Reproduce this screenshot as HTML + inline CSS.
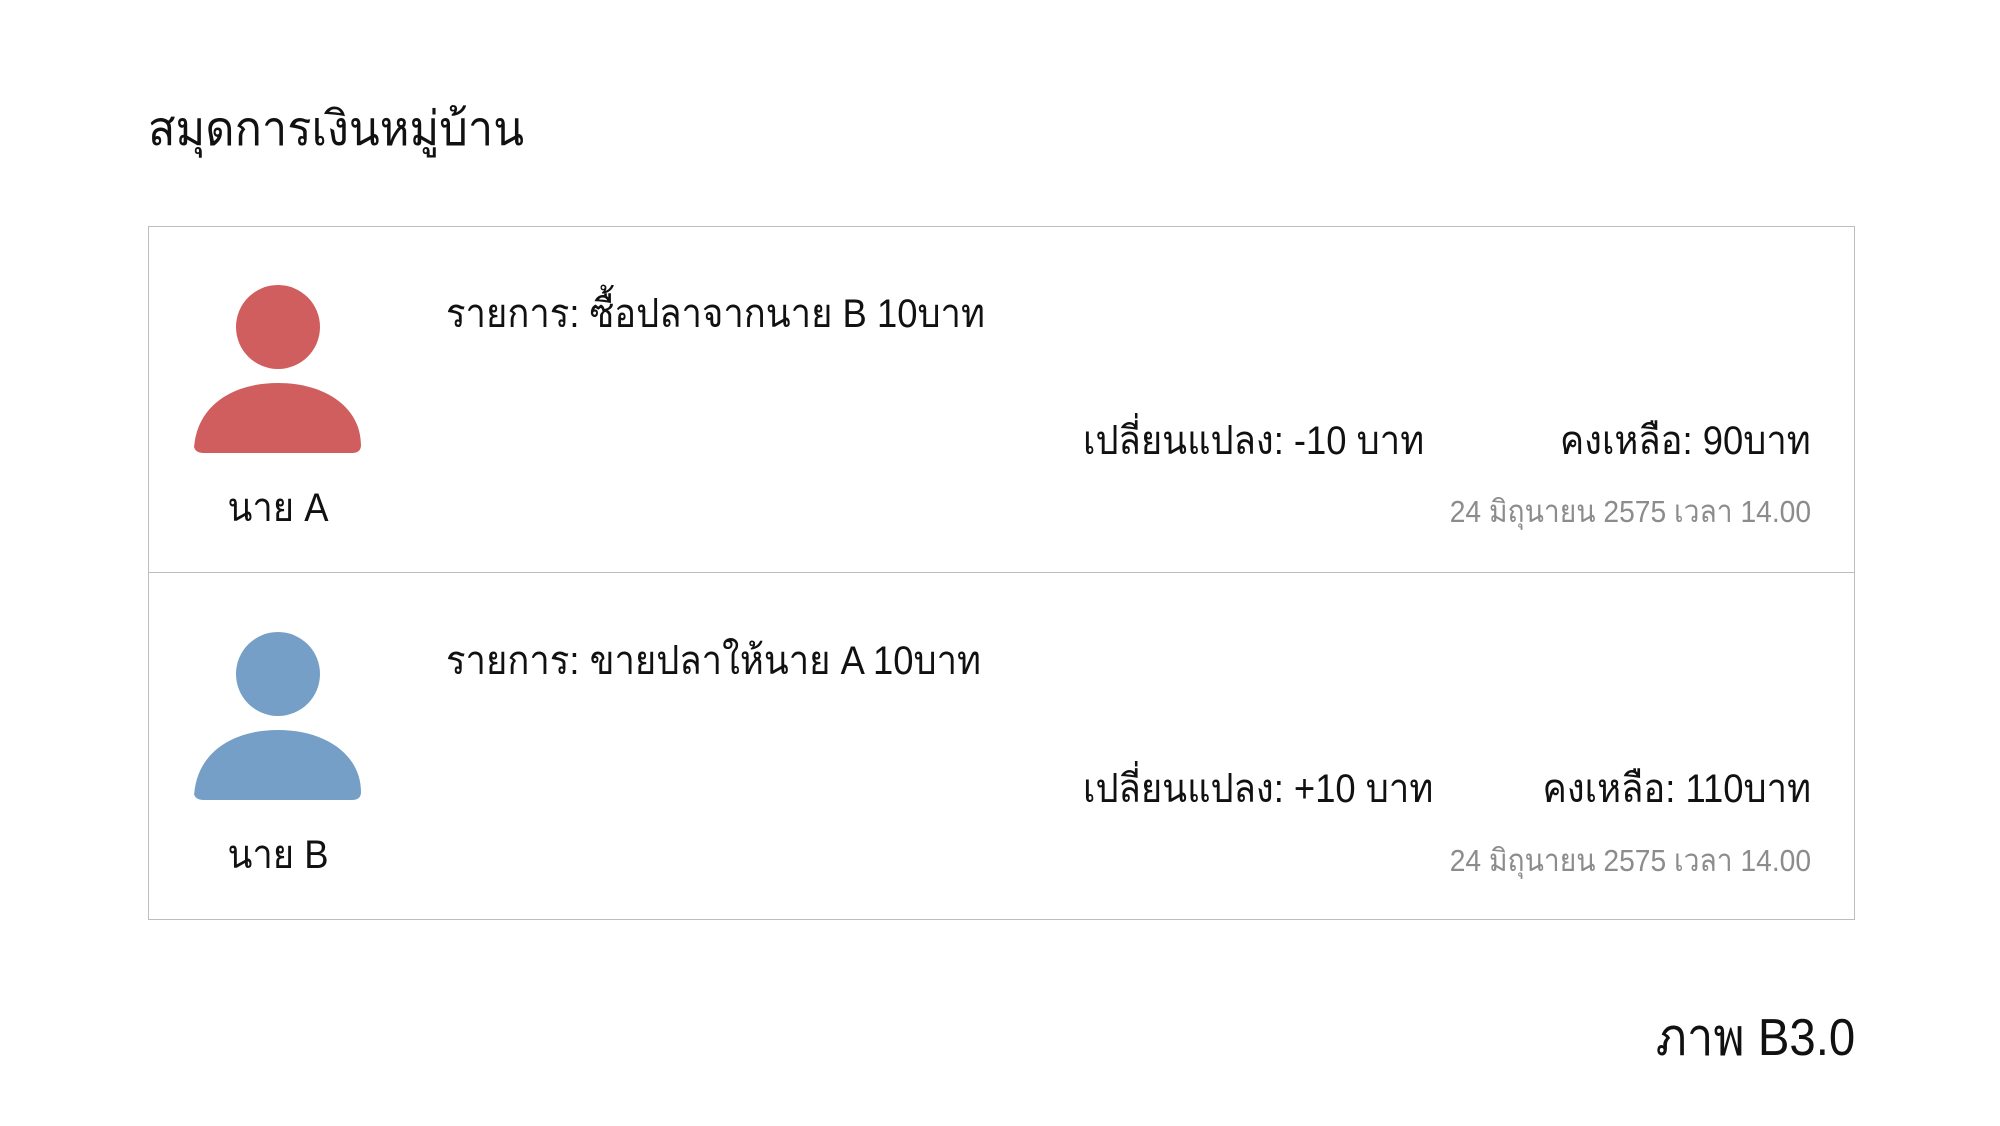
<!DOCTYPE html>
<html><head><meta charset="utf-8"><style>
html,body{margin:0;padding:0;background:#fff;width:2000px;height:1126px;overflow:hidden;font-family:"Liberation Sans","DejaVu Sans",sans-serif;color:#111}
.a{position:absolute;white-space:nowrap;line-height:1}
.l{transform:scaleX(0.91);transform-origin:left center}
.r{transform:scaleX(0.91);transform-origin:right center}
.c{transform:scaleX(0.91);transform-origin:center center}
.box{position:absolute;left:148px;top:226px;width:1707px;height:694px;border:1.5px solid #bdbdbd;box-sizing:border-box}
.sep{position:absolute;left:148px;top:572px;width:1707px;height:0;border-top:1.5px solid #bdbdbd}
.t{font-size:40px}
.d{font-size:31px;color:#8c8c8c}
</style></head><body>
<div class="a l" style="left:148px;top:106px;font-size:48px;transform:scaleX(0.94)">สมุดการเงินหมู่บ้าน</div>
<div class="box"></div>
<div class="sep"></div>

<svg class="a" style="left:190px;top:283px" width="176" height="175" viewBox="0 0 176 175">
<circle cx="88" cy="44" r="42" fill="#d05e5e"/>
<path d="M4 170 C4 125 40 100 88 100 C136 100 171 125 171 162 Q171 170 162 170 L14 170 Q4 170 4 162Z" fill="#d05e5e"/>
</svg>
<div class="a t c" style="left:178px;top:488px;width:200px;text-align:center">นาย A</div>
<div class="a t l" style="left:446px;top:294px">รายการ: ซื้อปลาจากนาย B 10บาท</div>
<div class="a t l" style="left:1083px;top:421px">เปลี่ยนแปลง: -10 บาท</div>
<div class="a t r" style="right:189px;top:421px">คงเหลือ: 90บาท</div>
<div class="a d r" style="right:189px;top:496px">24 มิถุนายน 2575 เวลา 14.00</div>

<svg class="a" style="left:190px;top:630px" width="176" height="175" viewBox="0 0 176 175">
<circle cx="88" cy="44" r="42" fill="#759fc6"/>
<path d="M4 170 C4 125 40 100 88 100 C136 100 171 125 171 162 Q171 170 162 170 L14 170 Q4 170 4 162Z" fill="#759fc6"/>
</svg>
<div class="a t c" style="left:178px;top:835px;width:200px;text-align:center">นาย B</div>
<div class="a t l" style="left:446px;top:641px">รายการ: ขายปลาให้นาย A 10บาท</div>
<div class="a t l" style="left:1083px;top:769px">เปลี่ยนแปลง: +10 บาท</div>
<div class="a t r" style="right:189px;top:769px">คงเหลือ: 110บาท</div>
<div class="a d r" style="right:189px;top:845px">24 มิถุนายน 2575 เวลา 14.00</div>

<div class="a r" style="right:145px;top:1012px;font-size:52px">ภาพ B3.0</div>
</body></html>
